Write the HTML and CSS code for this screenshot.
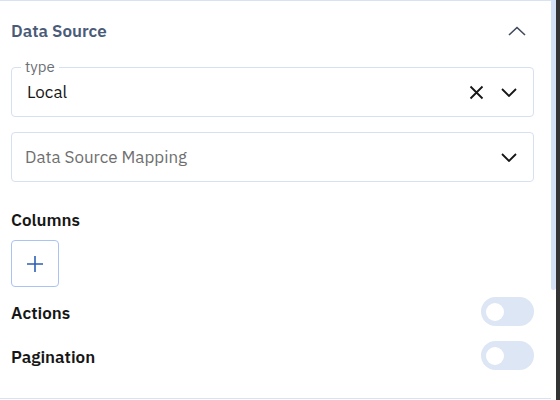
FILE: index.html
```html
<!DOCTYPE html>
<html>
<head>
<meta charset="utf-8">
<link rel="stylesheet" href="styles.css">
</head>
<body>
<div class="frame">
  <div class="panel">
    <div class="header">
      <span class="title">Data Source</span>
      <svg class="chev-up" width="18" height="10" viewBox="0 0 18 10"><path d="M1 9 L9 1.5 L17 9" fill="none" stroke="#3f4a5a" stroke-width="1.6"/></svg>
    </div>
    <div class="select">
      <span class="legend">type</span>
      <span class="value">Local</span>
      <svg class="icon-x" width="15" height="15" viewBox="0 0 15 15"><path d="M1.5 1.5 L13.5 13.5 M13.5 1.5 L1.5 13.5" fill="none" stroke="#161616" stroke-width="1.8"/></svg>
      <svg class="chev" width="16" height="9" viewBox="0 0 16 9"><path d="M1 1 L8 8 L15 1" fill="none" stroke="#161616" stroke-width="1.8"/></svg>
    </div>
    <div class="select second">
      <span class="placeholder">Data Source Mapping</span>
      <svg class="chev" width="16" height="9" viewBox="0 0 16 9"><path d="M1 1 L8 8 L15 1" fill="none" stroke="#161616" stroke-width="1.8"/></svg>
    </div>
    <div class="label columns">Columns</div>
    <button class="add"><svg width="18" height="18" viewBox="0 0 18 18"><path d="M9 1 V17 M1 9 H17" fill="none" stroke="#2f5eb5" stroke-width="1.6"/></svg></button>
    <div class="row actions">
      <span class="label">Actions</span>
      <span class="toggle"><span class="knob"></span></span>
    </div>
    <div class="row pagination">
      <span class="label">Pagination</span>
      <span class="toggle"><span class="knob"></span></span>
    </div>
  </div>
  <div class="track"><div class="thumb"></div></div>
  <div class="edge"></div>
</div>
</body>
</html>
```
FILE: styles.css
```css
* { box-sizing: border-box; }
html, body { margin: 0; padding: 0; background: #fff; }
body {
  font-family: "IBM Plex Sans", "Noto Sans", "Open Sans", sans-serif;
  color: #161616;
}
.frame {
  display: flex;
  width: 560px;
  height: 400px;
  overflow: hidden;
}
.panel {
  width: 551px;
  height: 399px;
  border-top: 1px solid #d8e2f3;
  border-bottom: 1px solid #d8e2f3;
  padding: 0 17px 0 11px;
  display: flex;
  flex-direction: column;
}
.header {
  height: 60px;
  display: flex;
  align-items: center;
  justify-content: space-between;
}
.title {
  font-size: 17px;
  font-weight: 600;
  color: #4a5b78;
}
.chev-up { margin-right: 8px; margin-top: -1px; }
.select {
  position: relative;
  margin-top: 6px;
  height: 50px;
  border: 1px solid #d6e0f1;
  border-radius: 4px;
  display: flex;
  align-items: center;
  padding: 0 16px 0 15px;
}
.select.second { margin-top: 15px; padding-left: 13px; }
.legend {
  position: absolute;
  left: 9px;
  top: -10px;
  padding: 0 4px;
  background: #fff;
  font-size: 15px;
  line-height: 18px;
  color: #6b6f76;
}
.value { font-size: 17px; flex: 1; color: #161616; }
.placeholder { font-size: 17px; flex: 1; color: #6f6f6f; }
.icon-x { margin-right: 17px; }
.label {
  font-size: 17px;
  font-weight: 600;
  color: #161616;
  line-height: 24px;
}
.columns { margin-top: 26px; }
.add {
  margin-top: 8px;
  width: 48px;
  height: 47px;
  padding: 0;
  background: #fff;
  border: 1px solid #a9c4f3;
  border-radius: 4px;
  display: flex;
  align-items: center;
  justify-content: center;
}
.row {
  display: flex;
  align-items: center;
  justify-content: space-between;
  height: 29px;
}
.actions { margin-top: 10px; }
.pagination { margin-top: 15px; }
.row .label { margin-top: 2px; }
.toggle {
  width: 53px;
  height: 29px;
  border-radius: 15px;
  background: #dde6f5;
  display: flex;
  align-items: center;
  padding-left: 5px;
}
.knob {
  width: 18px;
  height: 18px;
  border-radius: 50%;
  background: #fff;
}
.track {
  width: 5px;
  height: 400px;
  background: #fff;
}
.thumb {
  width: 5px;
  height: 290px;
  background: #d4e0f6;
  border-radius: 0 0 3px 3px;
}
.edge {
  width: 4px;
  height: 400px;
  background: #333;
}
```
